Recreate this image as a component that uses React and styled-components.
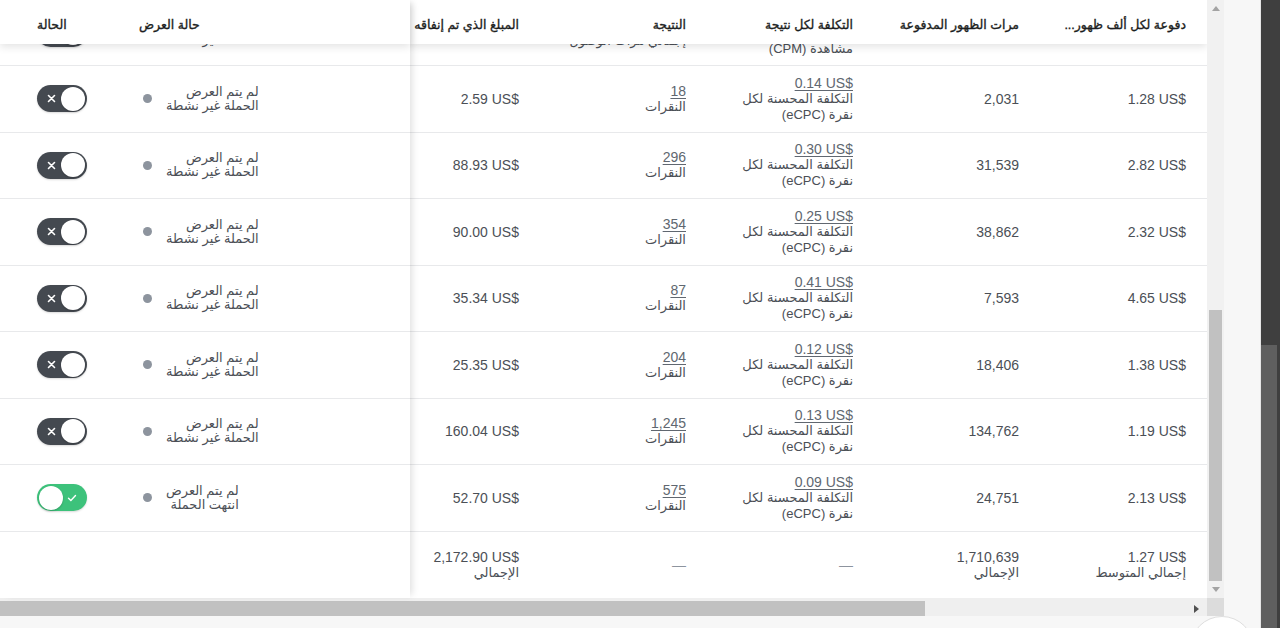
import React from 'react';
import styled, { createGlobalStyle } from 'styled-components';

// بيانات الحملات المعروضة في الجدول
const campaigns = [
  { id: 1, cpm: '1.28 US$', impressions: '2,031', cost: '0.14 US$', result: '18', spent: '2.59 US$', on: false, state: 'الحملة غير نشطة' },
  { id: 2, cpm: '2.82 US$', impressions: '31,539', cost: '0.30 US$', result: '296', spent: '88.93 US$', on: false, state: 'الحملة غير نشطة' },
  { id: 3, cpm: '2.32 US$', impressions: '38,862', cost: '0.25 US$', result: '354', spent: '90.00 US$', on: false, state: 'الحملة غير نشطة' },
  { id: 4, cpm: '4.65 US$', impressions: '7,593', cost: '0.41 US$', result: '87', spent: '35.34 US$', on: false, state: 'الحملة غير نشطة' },
  { id: 5, cpm: '1.38 US$', impressions: '18,406', cost: '0.12 US$', result: '204', spent: '25.35 US$', on: false, state: 'الحملة غير نشطة' },
  { id: 6, cpm: '1.19 US$', impressions: '134,762', cost: '0.13 US$', result: '1,245', spent: '160.04 US$', on: false, state: 'الحملة غير نشطة' },
  { id: 7, cpm: '2.13 US$', impressions: '24,751', cost: '0.09 US$', result: '575', spent: '52.70 US$', on: true, state: 'انتهت الحملة' },
];

const STICKY_COLS = '107px 173px 130px';
const SCROLL_COLS = '167px 166px 167px 167px 130px';

const GlobalStyle = createGlobalStyle`
  html, body { margin: 0; padding: 0; background: #fff; }
  body { font-family: "Liberation Sans", "DejaVu Sans", Arial, sans-serif; }
  * { box-sizing: border-box; }
`;

const Page = styled.div`
  position: relative;
  display: flex;
  width: 1280px;
  height: 628px;
  overflow: hidden;
  background: #f7f7f7;
`;

const Main = styled.div`
  display: flex;
  flex-direction: column;
  width: 1224px;
`;

const Body = styled.div`
  display: flex;
  height: 598px;
  background: #fff;
`;

const Table = styled.div`
  display: flex;
  width: 1207px;
`;

const StickyPanel = styled.div`
  width: 410px;
  flex-shrink: 0;
  position: relative;
  z-index: 3;
  background: #fff;
  box-shadow: 5px 0 7px -3px rgba(0, 0, 0, 0.13);
`;

const ScrollPanel = styled.div`
  width: 797px;
  overflow: hidden;
  direction: rtl;
`;

const Row = styled.div`
  display: grid;
  grid-template-columns: ${(p) => p.$cols};
  height: ${(p) => p.$h || '66.5px'};
  border-bottom: ${(p) => (p.$last ? 'none' : '1px solid #e8e9eb')};
  background: #fff;
`;

const HeaderRow = styled(Row)`
  position: relative;
  z-index: 2;
  height: 44px;
  border-bottom: none;
  box-shadow: 0 3px 8px rgba(0, 0, 0, 0.11);
`;

const Clip = styled.div`
  height: 22px;
  overflow: hidden;
  border-bottom: 1px solid #e8e9eb;
`;

const HiddenRow = styled(Row)`
  margin-top: -44px;
  height: 66px;
  border-bottom: none;
`;

const HeadCell = styled.div`
  display: flex;
  align-items: center;
  justify-content: ${(p) => (p.$ltr ? 'flex-end' : 'flex-start')};
  padding: 4px 21px 0;
  padding-left: ${(p) => (p.$left ? `${p.$left}px` : '21px')};
  font-size: 12.5px;
  font-weight: normal;
  color: #1c1e21;
  -webkit-text-stroke: 0.35px #1c1e21;
  white-space: nowrap;
  direction: ${(p) => (p.$left || p.$ltr ? 'ltr' : 'rtl')};
`;

const Cell = styled.div`
  display: flex;
  flex-direction: column;
  justify-content: center;
  padding: 0 21px;
  text-align: right;
  font-size: 14px;
  line-height: 16px;
  color: #4b4f56;
  white-space: nowrap;
`;

const LeftCell = styled.div`
  display: flex;
  align-items: center;
  padding-left: ${(p) => p.$pad}px;
`;

const Num = styled.span`
  direction: ltr;
  unicode-bidi: isolate;
  text-align: right;
  ${(p) => p.$link && 'text-decoration: underline; text-underline-offset: 2px; color: #606770;'}
`;

const Sub = styled.span`
  font-size: 13px;
  line-height: 16px;
  color: #4b4f56;
`;

const Dash = styled.span`
  color: #8d949e;
  font-size: 14px;
`;

const Dot = styled.span`
  width: 9px;
  height: 9px;
  border-radius: 50%;
  background: #8d949e;
  margin-right: 14px;
  flex-shrink: 0;
`;

const StateText = styled.div`
  direction: rtl;
  text-align: right;
  font-size: 13px;
  line-height: 14px;
  color: #4b4f56;
  white-space: nowrap;
`;

const Toggle = styled.span`
  display: flex;
  align-items: center;
  justify-content: space-between;
  flex-direction: ${(p) => (p.$on ? 'row-reverse' : 'row')};
  width: 50px;
  height: 27px;
  padding: 0 2px 0 ${(p) => (p.$on ? '2px' : '10px')};
  ${(p) => p.$on && 'padding-right: 10px;'}
  border-radius: 14px;
  background: ${(p) => (p.$on ? '#3dc27b' : '#444950')};
  box-shadow: 0 1px 2px rgba(0, 0, 0, 0.15);
`;

const Knob = styled.span`
  width: 24px;
  height: 24px;
  border-radius: 50%;
  background: #fff;
  box-shadow: 0 1px 2px rgba(0, 0, 0, 0.2);
`;

const VScroll = styled.div`
  width: 17px;
  display: flex;
  flex-direction: column;
  background: #f1f1f1;
`;

const Arrow = styled.div`
  height: 17px;
  display: flex;
  align-items: center;
  justify-content: center;
`;

const VTrack = styled.div`
  flex: 1;
  display: flex;
  flex-direction: column;
  justify-content: flex-end;
`;

const VThumb = styled.div`
  height: 271px;
  margin: 0 2px;
  background: #c1c1c1;
`;

const HScroll = styled.div`
  display: flex;
  height: 18px;
  background: #efefef;
`;

const HTrack = styled.div`
  width: 1207px;
  display: flex;
  align-items: flex-end;
`;

const HThumb = styled.div`
  width: 925px;
  height: 15px;
  background: #c1c1c1;
`;

const HArrow = styled.div`
  margin-left: auto;
  width: 22px;
  height: 15px;
  display: flex;
  align-items: center;
  justify-content: center;
`;

const Corner = styled.div`
  width: 17px;
  background: #dcdcdc;
`;

const Gutter = styled.div`
  width: 37px;
  background: #f7f7f7;
  border-right: 1px solid #e6e6e6;
`;

const DarkRail = styled.div`
  width: 19px;
  display: flex;
  flex-direction: column;
  padding-top: 345px;
  background: #3f3f3f;
`;

const RailThumb = styled.div`
  flex: 1;
  width: 16px;
  background: #5f5f5f;
`;

const FloatingButton = styled.div`
  position: absolute;
  left: 1190px;
  top: 616px;
  width: 64px;
  height: 64px;
  border-radius: 50%;
  background: #fff;
  border: 1px solid #dedede;
  z-index: 5;
`;

const Cross = () => (
  <svg width="9" height="9" viewBox="0 0 9 9">
    <path d="M1.5 1.5l6 6M7.5 1.5l-6 6" stroke="#fff" strokeWidth="1.6" strokeLinecap="round" />
  </svg>
);

const Check = () => (
  <svg width="10" height="8" viewBox="0 0 10 8">
    <path d="M1.5 4.2l2.4 2.3L8.5 1.5" stroke="#fff" strokeWidth="1.4" fill="none" strokeLinecap="round" />
  </svg>
);

const Triangle = ({ dir }) => {
  const d = { up: 'M0 5L4 0L8 5Z', down: 'M0 0L8 0L4 5Z', right: 'M0 0L5 4L0 8Z' }[dir];
  const w = dir === 'right' ? 5 : 8;
  const h = dir === 'right' ? 8 : 5;
  return (
    <svg width={w} height={h} viewBox={`0 0 ${w} ${h}`}>
      <path d={d} fill={dir === 'right' ? '#505050' : '#a3a3a3'} />
    </svg>
  );
};

const Switch = ({ on }) => (
  <Toggle $on={on}>
    {on ? <Check /> : <Cross />}
    <Knob />
  </Toggle>
);

const StickyCells = ({ on, state }) => (
  <>
    <LeftCell $pad={37}>
      <Switch on={on} />
    </LeftCell>
    <LeftCell $pad={36}>
      <Dot />
      <StateText>
        <div>لم يتم العرض</div>
        <div>{state}</div>
      </StateText>
    </LeftCell>
    <div />
  </>
);

const ScrollCells = ({ c }) => (
  <>
    <Cell><Num>{c.cpm}</Num></Cell>
    <Cell><Num>{c.impressions}</Num></Cell>
    <Cell>
      <Num $link>{c.cost}</Num>
      <Sub>التكلفة المحسنة لكل</Sub>
      <Sub>نقرة (eCPC)</Sub>
    </Cell>
    <Cell>
      <Num $link>{c.result}</Num>
      <Sub>النقرات</Sub>
    </Cell>
    <Cell><Num>{c.spent}</Num></Cell>
  </>
);

const App = () => {
  return (
    <>
      <GlobalStyle />
      <Page>
        <Main>
          <Body>
            <Table>
              <StickyPanel>
                <HeaderRow $cols={STICKY_COLS}>
                  <HeadCell $left={37}>الحالة</HeadCell>
                  <HeadCell $left={32}>حالة العرض</HeadCell>
                  <div />
                </HeaderRow>
                <Clip>
                  <HiddenRow $cols={STICKY_COLS}>
                    <StickyCells on={false} state="الحملة غير نشطة" />
                  </HiddenRow>
                </Clip>
                {campaigns.map((c) => (
                  <Row key={c.id} $cols={STICKY_COLS}>
                    <StickyCells on={c.on} state={c.state} />
                  </Row>
                ))}
                <Row $cols={STICKY_COLS} $last />
              </StickyPanel>

              <ScrollPanel>
                <HeaderRow $cols={SCROLL_COLS}>
                  <HeadCell $ltr>...دفوعة لكل ألف ظهور</HeadCell>
                  <HeadCell>مرات الظهور المدفوعة</HeadCell>
                  <HeadCell>التكلفة لكل نتيجة</HeadCell>
                  <HeadCell>النتيجة</HeadCell>
                  <HeadCell>المبلغ الذي تم إنفاقه</HeadCell>
                </HeaderRow>
                <Clip>
                  <HiddenRow $cols={SCROLL_COLS}>
                    <Cell><Num>1.05 US$</Num></Cell>
                    <Cell><Num>9,412</Num></Cell>
                    <Cell>
                      <Num $link>0.01 US$</Num>
                      <Sub>التكلفة لكل 1,000</Sub>
                      <Sub>مشاهدة (CPM)</Sub>
                    </Cell>
                    <Cell>
                      <Num $link>8,710</Num>
                      <Sub>إجمالي مرات الوصول</Sub>
                    </Cell>
                    <Cell><Num>9.88 US$</Num></Cell>
                  </HiddenRow>
                </Clip>
                {campaigns.map((c) => (
                  <Row key={c.id} $cols={SCROLL_COLS}>
                    <ScrollCells c={c} />
                  </Row>
                ))}
                <Row $cols={SCROLL_COLS} $last>
                  <Cell>
                    <Num>1.27 US$</Num>
                    <Sub>إجمالي المتوسط</Sub>
                  </Cell>
                  <Cell>
                    <Num>1,710,639</Num>
                    <Sub>الإجمالي</Sub>
                  </Cell>
                  <Cell><Dash>—</Dash></Cell>
                  <Cell><Dash>—</Dash></Cell>
                  <Cell>
                    <Num>2,172.90 US$</Num>
                    <Sub>الإجمالي</Sub>
                  </Cell>
                </Row>
              </ScrollPanel>
            </Table>

            <VScroll>
              <Arrow><Triangle dir="up" /></Arrow>
              <VTrack>
                <VThumb />
              </VTrack>
              <Arrow><Triangle dir="down" /></Arrow>
            </VScroll>
          </Body>

          <HScroll>
            <HTrack>
              <HThumb />
              <HArrow><Triangle dir="right" /></HArrow>
            </HTrack>
            <Corner />
          </HScroll>
        </Main>
        <Gutter />
        <DarkRail>
          <RailThumb />
        </DarkRail>
        <FloatingButton />
      </Page>
    </>
  );
};

export default App;
